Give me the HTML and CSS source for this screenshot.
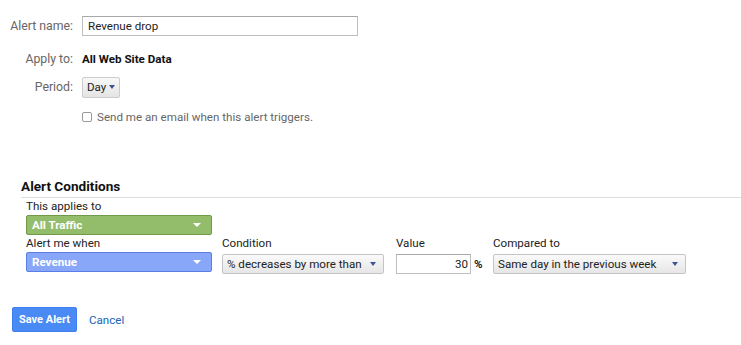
FILE: index.html
```html
<!DOCTYPE html>
<html lang="en">
<head>
    <meta charset="UTF-8">
    <title>Create Alert</title>
    <link rel="stylesheet" href="styles.css">
</head>
<body>

<div class="alert-form">
    <div class="form-row row-name">
        <label class="form-label">Alert name:</label>
        <div class="text-input name-input">Revenue drop</div>
    </div>
    <div class="form-row row-apply">
        <span class="form-label">Apply to:</span>
        <strong class="apply-value">All Web Site Data</strong>
    </div>
    <div class="form-row row-period">
        <span class="form-label">Period:</span>
        <div class="period-button">Day <span class="caret caret-blue"></span></div>
    </div>
    <div class="form-row row-email">
        <span class="form-label"></span>
        <div class="email-check">
            <span class="checkbox"></span>
            Send me an email when this alert triggers.
        </div>
    </div>
</div>

<div class="conditions">
    <h2 class="conditions-title">Alert Conditions</h2>
    <div class="conditions-body">
        <div class="field-label">This applies to</div>
        <div class="segment-box segment-green">All Traffic <span class="caret caret-white"></span></div>

        <div class="condition-row">
            <div class="field col-metric">
                <div class="field-label">Alert me when</div>
                <div class="segment-box segment-blue">Revenue <span class="caret caret-white"></span></div>
            </div>
            <div class="field col-condition">
                <div class="field-label">Condition</div>
                <div class="select-box">% decreases by more than <span class="caret caret-blue"></span></div>
            </div>
            <div class="field col-value">
                <div class="field-label">Value</div>
                <div class="value-wrap">
                    <div class="text-input value-input">30</div>
                    <span class="percent">%</span>
                </div>
            </div>
            <div class="field col-compare">
                <div class="field-label">Compared to</div>
                <div class="select-box">Same day in the previous week <span class="caret caret-blue"></span></div>
            </div>
        </div>
    </div>
</div>

<div class="actions">
    <button class="save-button">Save Alert</button>
    <a class="cancel-link" href="#">Cancel</a>
</div>

</body>
</html>
```

FILE: styles.css
```css
body {
    font-family: Roboto, Arial, sans-serif;
    font-size: 11.6px;
    color: #222;
    background-color: #fff;
    margin: 0;
    padding: 0;
}

/* top form */
.alert-form {
    padding: 16px 0 0 10px;
}

.form-row {
    display: flex;
    align-items: center;
    height: 20px;
}

.row-apply {
    margin-top: 13px;
}

.row-period {
    margin-top: 8px;
}

.row-email {
    margin-top: 10px;
}

.form-label {
    flex-shrink: 0;
    width: 63px;
    margin-right: 9px;
    text-align: right;
    white-space: nowrap;
    color: #666;
    font-size: 12.3px;
}

.text-input {
    box-sizing: border-box;
    height: 20px;
    line-height: 18px;
    border: 1px solid #c0c0c0;
    border-top-color: #a8a8a8;
    padding: 0 5px;
    background-color: #fff;
    color: #222;
}

.name-input {
    width: 276px;
}

.apply-value {
    font-weight: bold;
    color: #111;
}

.period-button {
    box-sizing: border-box;
    height: 21px;
    width: 38px;
    padding: 0 4px;
    line-height: 19px;
    border: 1px solid #ccc;
    border-radius: 2px;
    background: linear-gradient(#f8f8f8, #e4e4e4);
    color: #222;
    display: flex;
    align-items: center;
    gap: 3px;
}

.email-check {
    display: flex;
    align-items: center;
    color: #666;
}

.checkbox {
    box-sizing: border-box;
    width: 10px;
    height: 10px;
    border: 1px solid #999;
    border-radius: 2px;
    margin-right: 5px;
    background-color: #fff;
}

/* carets */
.caret {
    display: inline-block;
    width: 0;
    height: 0;
    border-left: 3px solid transparent;
    border-right: 3px solid transparent;
    border-top: 4px solid #3c5494;
}

.caret-white {
    border-top-color: #fff;
    border-left-width: 4px;
    border-right-width: 4px;
}

/* conditions */
.conditions {
    margin: 51px 0 0 21px;
}

.conditions-title {
    margin: 0;
    font-size: 13.6px;
    line-height: 16px;
    font-weight: bold;
    color: #111;
    padding-bottom: 3px;
    border-bottom: 1px solid #ddd;
}

.conditions-body {
    padding-left: 5px;
    padding-top: 1px;
}

.field-label {
    line-height: 14px;
    height: 14px;
    color: #222;
    margin-bottom: 2px;
}

.segment-box {
    box-sizing: border-box;
    width: 186px;
    height: 20px;
    padding: 0 10px 0 5px;
    border-radius: 2px;
    border: 1px solid;
    color: #fff;
    font-weight: bold;
    display: flex;
    align-items: center;
    justify-content: space-between;
}

.segment-green {
    background-color: #93bd6b;
    border-color: #6f9a48;
}

.segment-blue {
    background-color: #89a7f9;
    border-color: #5b7ee6;
}

.condition-row {
    display: flex;
    margin-top: 1px;
}

.col-metric {
    width: 186px;
    margin-right: 10px;
}

.col-condition {
    width: 162px;
    margin-right: 12px;
}

.col-value {
    width: 97px;
}

.col-compare {
    width: 193px;
}

.col-condition .field-label,
.col-value .field-label,
.col-compare .field-label {
    margin-bottom: 4px;
}

.select-box {
    box-sizing: border-box;
    height: 20px;
    padding: 0 7px 0 4px;
    border: 1px solid #c4c4c4;
    border-radius: 2px;
    background: linear-gradient(#fafafa, #e6e6e6);
    color: #222;
    display: flex;
    align-items: center;
    justify-content: space-between;
}

.value-wrap {
    display: flex;
    align-items: center;
}

.value-input {
    width: 75px;
    text-align: right;
    padding-right: 2px;
}

.percent {
    margin-left: 3px;
    font-weight: bold;
    color: #222;
}

/* buttons */
.actions {
    margin: 33px 0 0 12px;
    display: flex;
    align-items: center;
}

.save-button {
    height: 25px;
    width: 65px;
    padding: 0;
    border: 1px solid #3f7ef0;
    border-radius: 2px;
    background-color: #4a8af4;
    color: #fff;
    font-family: Roboto, Arial, sans-serif;
    font-size: 11px;
    font-weight: bold;
    cursor: pointer;
}

.cancel-link {
    margin-left: 12px;
    color: #1a63b8;
    text-decoration: none;
}
```
